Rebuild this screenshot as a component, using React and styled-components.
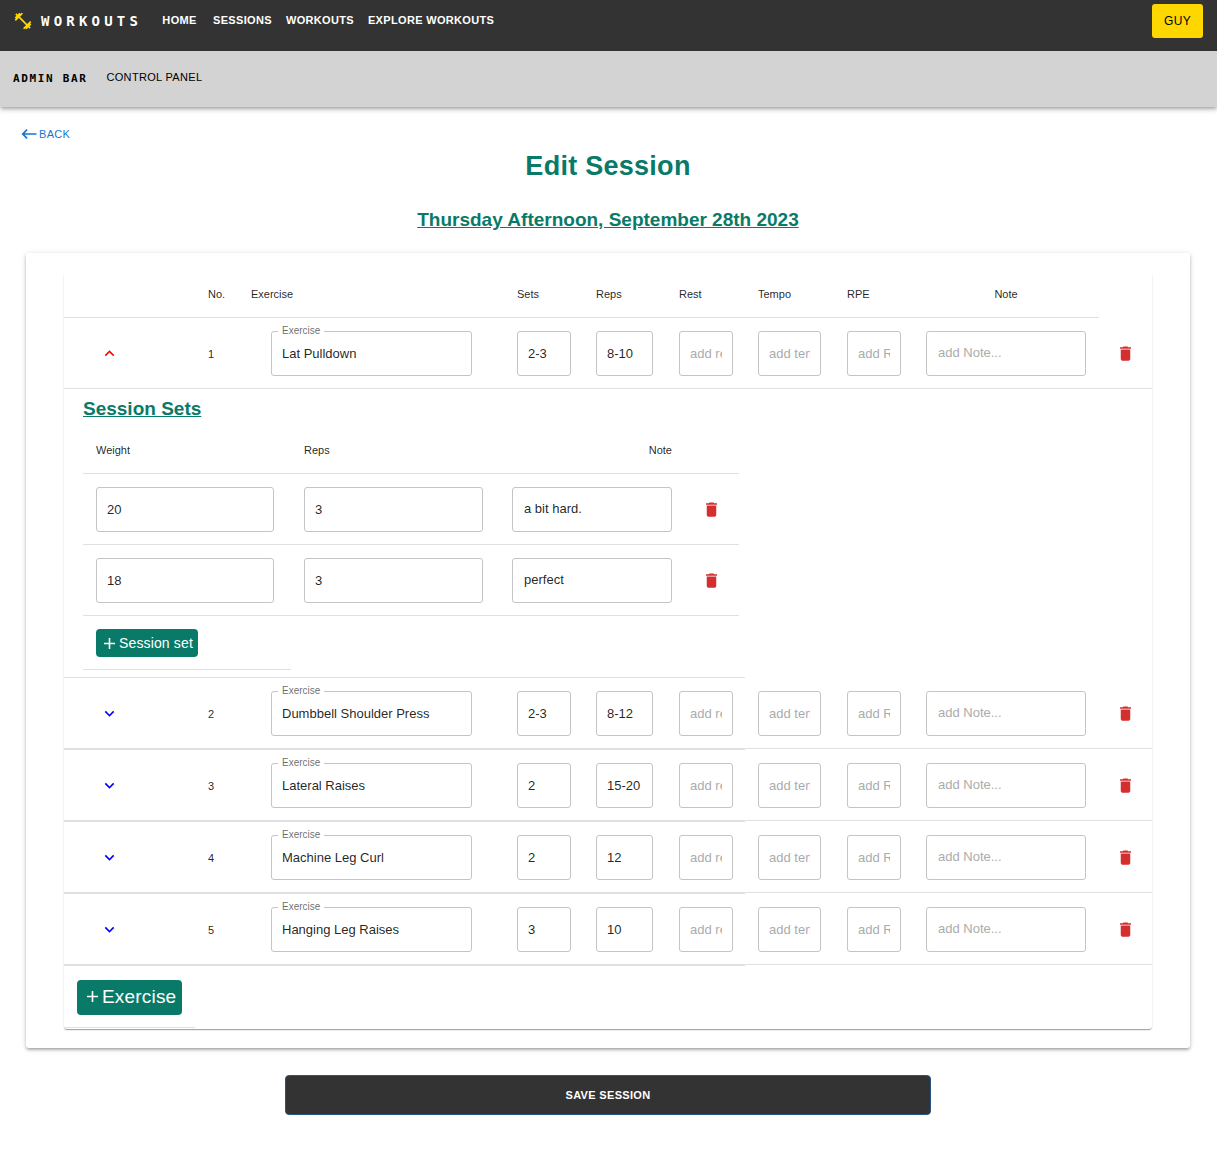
import React from "react";
import styled, { createGlobalStyle } from "styled-components";

const green = "#0a7a68";
const line = "#e0e0e0";
const sans = '"Liberation Sans", Arial, sans-serif';
const mono = '"DejaVu Sans Mono", Consolas, monospace';

const GlobalStyle = createGlobalStyle`
  *, *::before, *::after { box-sizing: border-box; }
  body {
    margin: 0;
    background: #fff;
    color: rgba(0, 0, 0, 0.87);
    font: 13px/18px ${sans};
  }
  h1, h2, h3 { margin: 0; color: ${green}; font-weight: 700; }
  button, input, textarea { font-family: inherit; }
`;

const Header = styled.header`
  box-shadow: 0 2px 3px -1px rgba(0, 0, 0, 0.2), 0 3px 4px rgba(0, 0, 0, 0.14),
    0 1px 8px rgba(0, 0, 0, 0.12);
`;

const MainBar = styled.nav`
  display: flex;
  align-items: flex-start;
  height: 51px;
  padding: 4px 14px 0 13px;
  background: #333;
`;

const Brand = styled.a`
  display: flex;
  align-items: center;
  gap: 8px;
  height: 34px;
  margin-right: 12px;
  color: #fff;
  font: 700 14px/20px ${mono};
  letter-spacing: 0.3em;
  text-decoration: none;
`;

const Links = styled.div`
  display: flex;
  flex: 1;
  gap: 2px;
`;

const NavLink = styled.a`
  min-width: 51px;
  padding: 7px 6px;
  color: #fff;
  font-size: 11px;
  font-weight: 700;
  letter-spacing: 0.03em;
  text-align: center;
  text-decoration: none;
`;

const AdminLink = styled(NavLink)`
  padding-bottom: 11px;
  color: #000;
  font-weight: 400;
`;

const UserButton = styled.button`
  width: 51px;
  height: 34px;
  padding: 0;
  border: 0;
  border-radius: 3px;
  background: gold;
  color: #000;
  font-size: 12px;
  letter-spacing: 0.03em;
`;

const AdminBar = styled.nav`
  display: flex;
  align-items: center;
  gap: 13px;
  height: 56px;
  padding: 0 13px;
  background: #d3d3d3;
`;

const AdminTitle = styled.span`
  color: #000;
  font: 700 11px/18px ${mono};
  letter-spacing: 0.15em;
`;

const Main = styled.main`
  display: flex;
  flex-direction: column;
  padding: 17px 27px 35px 26px;
`;

const BackLink = styled.a`
  display: flex;
  align-items: center;
  align-self: flex-start;
  height: 20px;
  margin-left: -7px;
  color: #1976d2;
  font-size: 11px;
  letter-spacing: 0.03em;
  text-decoration: none;
`;

const Title = styled.h1`
  margin-top: 5px;
  font-size: 27px;
  line-height: 34px;
  letter-spacing: 0.01em;
  text-align: center;
`;

const Subtitle = styled.h2`
  margin: 24px 0 20px;
  font-size: 19px;
  line-height: 26px;
  text-align: center;
  text-decoration: underline;
`;

const Card = styled.section`
  padding: 19px 38px;
  border-radius: 3px;
  background: #fff;
  box-shadow: 0 2px 2px -2px rgba(0, 0, 0, 0.2), 0 2px 3px rgba(0, 0, 0, 0.24),
    0 1px 6px rgba(0, 0, 0, 0.12);
`;

const TablePaper = styled.div`
  overflow-x: auto;
  padding-bottom: 1px;
  border-radius: 3px;
  box-shadow: 0 2px 1px -1px rgba(0, 0, 0, 0.2), 0 1px 1px rgba(0, 0, 0, 0.14),
    0 1px 2px rgba(0, 0, 0, 0.12);
`;

const Table = styled.table`
  width: 100%;
  min-width: ${(p) => p.$min}px;
  table-layout: fixed;
  border-collapse: separate;
  border-spacing: 0;
`;

const Col = styled.col`
  width: ${(p) => (p.$w ? `${p.$w}px` : "auto")};
`;

const HeadCell = styled.th`
  height: 46px;
  padding: 0 13px 2px;
  border-bottom: 1px solid ${line};
  font-size: 11px;
  font-weight: 400;
  text-align: ${(p) => p.$align || "left"};
`;

const Cell = styled.td`
  padding: 13px 12px 12px 13px;
  border-bottom: 1px solid ${line};
  font-size: 11px;
  text-align: left;
`;

const FooterCell = styled(Cell)`
  padding-top: 14px;
`;

const DetailCell = styled.td`
  padding: 0;
  border-bottom: 1px solid ${line};
`;

const Details = styled.div`
  padding: 7px 6px 7px 19px;
`;

const DetailsTitle = styled.h3`
  margin-bottom: 6px;
  font-size: 19px;
  line-height: 26px;
  text-decoration: underline;
`;

const Outlined = `
  display: block;
  height: 45px;
  border: 1px solid #c4c4c4;
  border-radius: 3px;
  background: #fff;
  color: rgba(0, 0, 0, 0.87);
  font-size: 13px;
  line-height: 18px;
  &::placeholder { color: #ababab; opacity: 1; }
`;

const Input = styled.input`
  ${Outlined}
  width: 100%;
  max-width: ${(p) => (p.$w ? `${p.$w}px` : "none")};
  padding: 0 10px;
`;

const NoteArea = styled.textarea`
  ${Outlined}
  width: 160px;
  padding: 12px 11px;
  overflow: hidden;
  resize: none;
`;

const LabelledField = styled.div`
  position: relative;
  margin: 0 20px;
`;

const FloatingLabel = styled.label`
  position: absolute;
  top: -6px;
  left: 7px;
  padding: 0 4px;
  background: #fff;
  color: rgba(0, 0, 0, 0.6);
  font-size: 10px;
  line-height: 12px;
`;

const IconButton = styled.button`
  display: inline-flex;
  align-items: center;
  justify-content: center;
  width: ${(p) => p.$w || 27}px;
  height: 27px;
  padding: 0;
  border: 0;
  background: none;
  color: ${(p) => p.$color};
  vertical-align: middle;
`;

const AddButton = styled.button`
  display: flex;
  align-items: center;
  height: ${(p) => (p.$large ? 35 : 28)}px;
  padding: ${(p) => (p.$large ? "0 6px 2px 6px" : "0 5px 0 4px")};
  border: 0;
  border-radius: 4px;
  background: ${green};
  color: #fff;
  font-size: ${(p) => (p.$large ? 19 : 14)}px;
  line-height: 20px;
  letter-spacing: 0.01em;
  white-space: nowrap;
`;

const SaveButton = styled.button`
  align-self: center;
  width: 100%;
  max-width: 646px;
  height: 40px;
  margin-top: 27px;
  border: 1px solid #265583;
  border-radius: 4px;
  background: #333;
  color: #fff;
  font-size: 11px;
  font-weight: 700;
  letter-spacing: 0.03em;
`;

const paths = {
  dumbbell:
    "M20.57 14.86 22 13.43 20.57 12 17 15.57 8.43 7 12 3.43 10.57 2 9.14 3.43 7.71 2 5.57 4.14 4.14 2.71 2.71 4.14l1.43 1.43L2 7.71l1.43 1.43L2 10.57 3.43 12 7 8.43 15.57 17 12 20.57 13.43 22l1.43-1.43L16.29 22l2.14-2.14 1.43 1.43 1.43-1.43-1.43-1.43L22 16.29z",
  back: "M21 11H6.83l3.58-3.59L9 6l-6 6 6 6 1.41-1.41L6.83 13H21z",
  up: "M7.41 15.41 12 10.83l4.59 4.58L18 14l-6-6-6 6z",
  down: "M7.41 8.59 12 13.17l4.59-4.58L18 10l-6 6-6-6z",
  trash:
    "M6 19c0 1.1.9 2 2 2h8c1.1 0 2-.9 2-2V7H6zM19 4h-3.5l-1-1h-5l-1 1H5v2h14z",
  plus: "M19 13h-6v6h-2v-6H5v-2h6V5h2v6h6z",
};

function Icon({ name, size = 19, color = "currentColor" }) {
  return (
    <svg width={size} height={size} viewBox="0 0 24 24" fill={color} aria-hidden="true">
      <path d={paths[name]} />
    </svg>
  );
}

const sessionSets = [
  { weight: "20", reps: "3", note: "a bit hard." },
  { weight: "18", reps: "3", note: "perfect" },
];

const exercises = [
  { name: "Lat Pulldown", sets: "2-3", reps: "8-10", open: true },
  { name: "Dumbbell Shoulder Press", sets: "2-3", reps: "8-12" },
  { name: "Lateral Raises", sets: "2", reps: "15-20" },
  { name: "Machine Leg Curl", sets: "2", reps: "12" },
  { name: "Hanging Leg Raises", sets: "3", reps: "10" },
];

function DeleteButton({ label }) {
  return (
    <IconButton type="button" $color="#d32f2f" aria-label={label}>
      <Icon name="trash" />
    </IconButton>
  );
}

function SessionSets() {
  return (
    <Details>
      <DetailsTitle>Session Sets</DetailsTitle>
      <Table $min={600}>
        <colgroup>
          <Col />
          <Col />
          <Col $w={186} />
          <Col $w={54} />
        </colgroup>
        <thead>
          <tr>
            <HeadCell>Weight</HeadCell>
            <HeadCell>Reps</HeadCell>
            <HeadCell $align="right">Note</HeadCell>
            <HeadCell aria-label="Actions" />
          </tr>
        </thead>
        <tbody>
          {sessionSets.map((set, i) => (
            <tr key={i}>
              <Cell>
                <Input $w={178} defaultValue={set.weight} aria-label={`Weight, set ${i + 1}`} />
              </Cell>
              <Cell>
                <Input $w={179} defaultValue={set.reps} aria-label={`Reps, set ${i + 1}`} />
              </Cell>
              <Cell>
                <NoteArea defaultValue={set.note} aria-label={`Note, set ${i + 1}`} />
              </Cell>
              <Cell>
                <DeleteButton label={`Delete set ${i + 1}`} />
              </Cell>
            </tr>
          ))}
          <tr>
            <Cell>
              <AddButton type="button">
                <Icon name="plus" />
                Session set
              </AddButton>
            </Cell>
          </tr>
        </tbody>
      </Table>
    </Details>
  );
}

function ExerciseRow({ exercise, number }) {
  const id = `exercise-${number}`;
  return (
    <>
      <tr>
        <Cell>
          <IconButton
            type="button"
            $w={65}
            $color={exercise.open ? "red" : "blue"}
            aria-expanded={Boolean(exercise.open)}
            aria-label={`Toggle sets of ${exercise.name}`}
          >
            <Icon name={exercise.open ? "up" : "down"} />
          </IconButton>
        </Cell>
        <Cell>{number}</Cell>
        <Cell>
          <LabelledField>
            <FloatingLabel htmlFor={id}>Exercise</FloatingLabel>
            <Input id={id} defaultValue={exercise.name} />
          </LabelledField>
        </Cell>
        <Cell>
          <Input $w={54} defaultValue={exercise.sets} aria-label="Sets" />
        </Cell>
        <Cell>
          <Input $w={57} defaultValue={exercise.reps} aria-label="Reps" />
        </Cell>
        <Cell>
          <Input $w={54} placeholder="add rest" aria-label="Rest" />
        </Cell>
        <Cell>
          <Input $w={63} placeholder="add tempo" aria-label="Tempo" />
        </Cell>
        <Cell>
          <Input $w={54} placeholder="add RPE" aria-label="RPE" />
        </Cell>
        <Cell>
          <NoteArea placeholder="add Note..." aria-label="Note" />
        </Cell>
        <Cell>
          <DeleteButton label={`Delete ${exercise.name}`} />
        </Cell>
      </tr>
      <tr>
        <DetailCell colSpan={6}>{exercise.open && <SessionSets />}</DetailCell>
      </tr>
    </>
  );
}

export default function App() {
  return (
    <>
      <GlobalStyle />
      <Header>
        <MainBar>
          <Brand href="#">
            <Icon name="dumbbell" color="gold" size={20} />
            WORKOUTS
          </Brand>
          <Links>
            <NavLink href="#">HOME</NavLink>
            <NavLink href="#">SESSIONS</NavLink>
            <NavLink href="#">WORKOUTS</NavLink>
            <NavLink href="#">EXPLORE WORKOUTS</NavLink>
          </Links>
          <UserButton type="button">GUY</UserButton>
        </MainBar>
        <AdminBar>
          <AdminTitle>ADMIN BAR</AdminTitle>
          <AdminLink href="#">CONTROL PANEL</AdminLink>
        </AdminBar>
      </Header>
      <Main>
        <BackLink href="#">
          <Icon name="back" size={20} />
          BACK
        </BackLink>
        <Title>Edit Session</Title>
        <Subtitle>Thursday Afternoon, September 28th 2023</Subtitle>
        <Card>
          <TablePaper>
            <Table $min={1020}>
              <colgroup>
                <Col $w={131} />
                <Col $w={43} />
                <Col />
                <Col $w={79} />
                <Col $w={83} />
                <Col $w={79} />
                <Col $w={89} />
                <Col $w={79} />
                <Col $w={186} />
                <Col $w={53} />
              </colgroup>
              <thead>
                <tr>
                  <HeadCell aria-label="Toggle" />
                  <HeadCell>No.</HeadCell>
                  <HeadCell>Exercise</HeadCell>
                  <HeadCell>Sets</HeadCell>
                  <HeadCell>Reps</HeadCell>
                  <HeadCell>Rest</HeadCell>
                  <HeadCell>Tempo</HeadCell>
                  <HeadCell>RPE</HeadCell>
                  <HeadCell $align="center">Note</HeadCell>
                </tr>
              </thead>
              <tbody>
                {exercises.map((exercise, i) => (
                  <ExerciseRow key={exercise.name} exercise={exercise} number={i + 1} />
                ))}
                <tr>
                  <FooterCell>
                    <AddButton type="button" $large>
                      <Icon name="plus" />
                      Exercise
                    </AddButton>
                  </FooterCell>
                </tr>
              </tbody>
            </Table>
          </TablePaper>
        </Card>
        <SaveButton type="submit">SAVE SESSION</SaveButton>
      </Main>
    </>
  );
}
